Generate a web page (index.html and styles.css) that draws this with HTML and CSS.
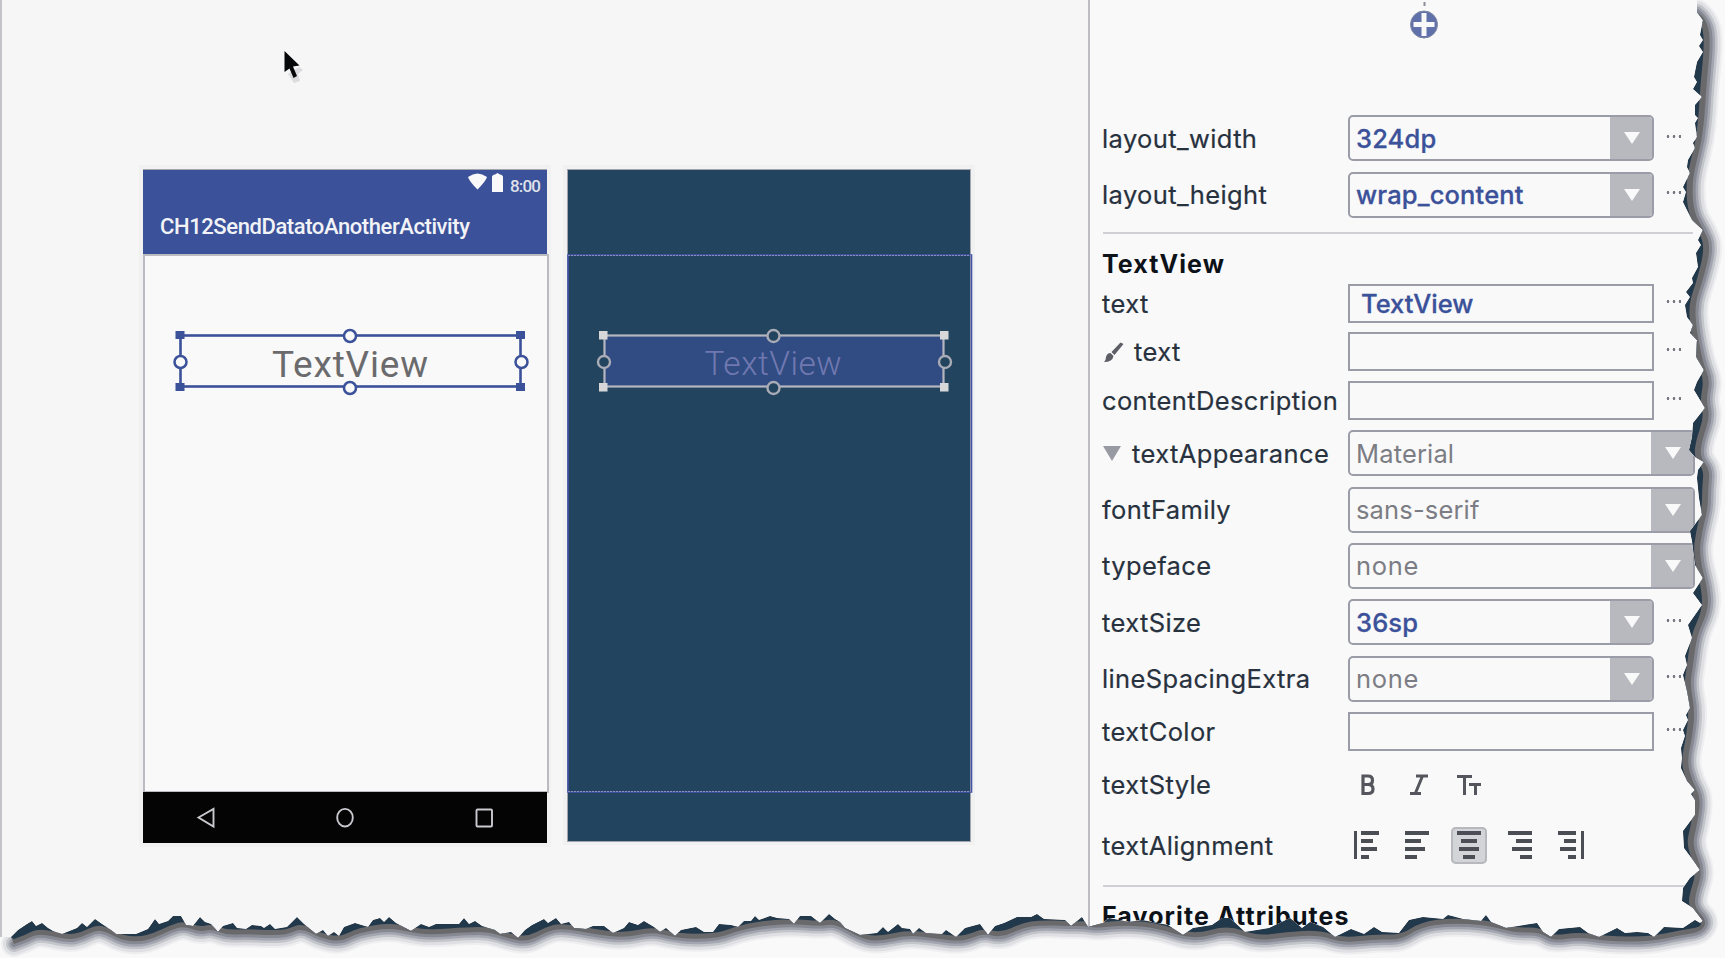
FILE: index.html
```html
<!DOCTYPE html>
<html lang="en">
<head>
<meta charset="utf-8">
<title>Layout Editor</title>
<link rel="stylesheet" href="styles.css">
</head>
<body>
<div class="editor">
  <main class="canvas">
    <svg class="surface" width="1088" height="958" viewBox="0 0 1088 958">
      <!-- design preview -->
      <rect class="halo" x="139" y="165" width="412" height="682"/>
      <rect class="halo" x="563" y="165" width="412" height="680"/>
      <rect x="143" y="169" width="404" height="86" fill="#3b5199"/>
      <path d="M143 169.500H547" stroke="#a3a5ad"/>
      <rect x="144" y="255" width="404" height="537" fill="#f9f9f9" stroke="#bbbcc1" stroke-width="2"/>
      <rect x="143" y="792" width="404" height="51" fill="#040404"/>
      <path d="M468 177Q477.500 170 487 177Q486 181 477.500 189.500Q469 181 468 177Z" fill="#f9f9f9"/>
      <path d="M492 177Q492 175 495 174.500L497.500 173L500 174.500Q503 175 503 177V192H492Z" fill="#f9f9f9"/>
      <text class="roboto clock" x="510" y="191.500" textLength="31">8:00</text>
      <text class="roboto title" x="160" y="233.500" textLength="310">CH12SendDatatoAnotherActivity</text>
      <rect x="180.500" y="335.500" width="340" height="51" fill="none" stroke="#3b5199" stroke-width="2.600"/>
      <g fill="#3b5199"><rect x="175.500" y="331" width="9" height="8"/><rect x="516" y="331" width="9" height="8"/><rect x="175.500" y="383" width="9" height="8"/><rect x="516" y="383" width="9" height="8"/></g>
      <g fill="#f9f9f9" stroke="#3b5199" stroke-width="2.500"><circle cx="350" cy="336" r="6"/><circle cx="350" cy="388" r="6"/><circle cx="180.500" cy="362" r="6"/><circle cx="521.500" cy="362" r="6"/></g>
      <text class="roboto view" x="272" y="377" textLength="156">TextView</text>
      <g fill="none" stroke="#c9cad0" stroke-width="1.900"><path d="M198.500 817.500L213.500 809V826.500Z"/><ellipse cx="345" cy="817.700" rx="7.800" ry="8.800"/><rect x="476.500" y="809.500" width="15.500" height="17" rx="1"/></g>
      <!-- blueprint -->
      <rect x="567.500" y="169.500" width="403" height="672" fill="#23445f" stroke="#a3a5ad"/>
      <rect x="568" y="255" width="403.500" height="537" fill="none" stroke="#4354a8" stroke-width="1.600"/>
      <path d="M568 255.500H971M568 791.500H971" stroke="#8b8fb8" stroke-width="1" stroke-dasharray="2 1"/>
      <rect x="604.500" y="335.500" width="339" height="51" fill="#304c83" stroke="#b5b6bf" stroke-width="2.200"/>
      <g fill="#d7d7da"><rect x="599" y="331" width="8.500" height="8.500"/><rect x="940" y="331" width="8.500" height="8.500"/><rect x="599" y="383" width="8.500" height="8.500"/><rect x="940" y="383" width="8.500" height="8.500"/></g>
      <g fill="#23445f" stroke="#a9abb6" stroke-width="2.400"><circle cx="773.500" cy="336" r="6"/><circle cx="773.500" cy="388" r="6"/><circle cx="604" cy="362" r="6"/><circle cx="945" cy="362" r="6"/></g>
      <text class="roboto blue" x="704.500" y="375" textLength="137">TextView</text>
      <!-- pointer -->
      <path d="M288 74L299 67L303 70L298 74L300 81L294 83Z" fill="#dcdce0"/>
      <path d="M284.500 51L299.500 65.500L293 66.500L297 76L293.500 78L289.500 68.500L284.500 72Z" fill="#050709"/>
    </svg>
  </main>
  <aside class="panel">
    <svg class="add" width="30" height="40" viewBox="0 0 30 40"><path d="M15.500 2V6" stroke="#8b8d97" stroke-width="2"/><circle cx="15" cy="24.500" r="13.500" fill="#6070aa" stroke="#8186a0"/><path d="M15 13V36M4.500 24.500H25.500" stroke="#f9f9f9" stroke-width="5"/></svg>
    <div class="row first"><label class="name">layout_width</label><div class="field combo"><span class="set">324dp</span><i class="drop"></i></div><b class="more"></b></div>
    <div class="row g11"><label class="name">layout_height</label><div class="field combo"><span class="set">wrap_content</span><i class="drop"></i></div><b class="more"></b></div>
    <hr class="rule g14">
    <h2 class="heading g15">TextView</h2>
    <div class="row short g5"><label class="name">text</label><div class="field"><span class="set inset">TextView</span></div><b class="more"></b></div>
    <div class="row short g9"><label class="name"><svg class="brush" width="30" height="22" viewBox="0 0 30 22"><path d="M18.500 1.500L21.500 3L12.500 14L9.500 11Z M8.500 12L11.500 15Q10.500 21 2 21Q4 19 4 16Q5 12 8.500 12Z" fill="#5e5f66"/></svg>text</label><div class="field"></div><b class="more"></b></div>
    <div class="row short g10"><label class="name">contentDescription</label><div class="field"></div><b class="more"></b></div>
    <div class="row g11"><label class="name"><i class="twist"></i>textAppearance</label><div class="field combo wide"><span>Material</span><i class="drop"></i></div></div>
    <div class="row g11"><label class="name">fontFamily</label><div class="field combo wide"><span>sans-serif</span><i class="drop"></i></div></div>
    <div class="row g10"><label class="name">typeface</label><div class="field combo wide"><span class="none">none</span><i class="drop"></i></div></div>
    <div class="row g11"><label class="name">textSize</label><div class="field combo"><span class="set">36sp</span><i class="drop"></i></div><b class="more"></b></div>
    <div class="row g11"><label class="name">lineSpacingExtra</label><div class="field combo"><span class="none">none</span><i class="drop"></i></div><b class="more"></b></div>
    <div class="row short g10"><label class="name">textColor</label><div class="field"></div><b class="more"></b></div>
    <div class="row style g19"><label class="name">textStyle</label>
      <svg width="150" height="30" viewBox="0 0 150 30" fill="none" stroke="#55565d" stroke-width="3"><path d="M14.500 6H20Q24.500 6 24.500 10.200Q24.500 14.500 20 14.500H14.500M20 14.500Q25 14.500 25 19Q25 23.500 20 23.500H14.500M15 4.500V25" stroke-width="3.200"/><path d="M68 6H80M62 23.500H73M74.500 6L67.500 23"/><path d="M109 6.500H124M116.500 6V25M121 14.500H133M127.500 14V25"/></svg>
    </div>
    <div class="row align g27"><label class="name">textAlignment</label>
      <div class="aligns">
        <svg width="36" height="37" viewBox="0 0 36 37"><path class="bar" d="M8.500 4V32"/><path d="M14 6H32M14 14H26M14 22H30M14 30H22"/></svg>
        <svg width="36" height="37" viewBox="0 0 36 37"><path d="M6 6H30M6 14H22M6 22H26M6 30H18"/></svg>
        <svg class="on" width="36" height="37" viewBox="0 0 36 37"><path d="M6 6H30M10 14H26M8 22H28M12 30H24"/></svg>
        <svg width="36" height="37" viewBox="0 0 36 37"><path d="M5 6H29M13 14H29M9 22H29M17 30H29"/></svg>
        <svg width="36" height="37" viewBox="0 0 36 37"><path class="bar" d="M27.500 4V32"/><path d="M3 6H21M9 14H21M5 22H21M13 30H21"/></svg>
      </div>
    </div>
    <hr class="rule g21">
    <h2 class="heading g14">Favorite Attributes</h2>
  </aside>
  <!-- torn paper border along the right and bottom sides -->
  <svg class="torn" width="1725" height="958" viewBox="0 0 1725 958">
    <defs>
      <path id="tear" d="M1697 12L1703 20L1700 35L1703 40L1699 46L1703 52L1697 62L1694 77L1697 82L1693 89L1702 97L1695 105V115L1698 118L1695 123L1697 137L1693 143L1695 148L1688 160L1687 167L1690 173L1683 187L1686 192L1683 202L1688 212L1692 220L1703 230L1698 240L1701 245L1696 253L1698 267L1692 278L1693 283L1686 292L1690 297L1685 305L1687 317L1693 325L1690 333L1697 340L1696 357L1704 370L1697 382L1694 390L1705 408L1693 423L1692 437L1689 450L1695 457L1704 462L1698 470L1697 478L1699 498L1702 515L1690 531L1692 541L1695 565L1703 578L1693 593L1702 605L1688 625L1692 638L1685 656L1687 665L1683 675L1687 691L1690 708L1686 715L1688 720L1683 730L1685 736L1681 748L1682 758L1681 768L1687 781L1695 790L1691 794L1695 800V815L1683 831L1684 848L1693 860L1700 870L1690 878L1683 888L1682 901L1693 908L1703 921L1700 923L1695 920L1683 928L1664 927L1654 937L1648 933L1637 932L1625 933L1617 928L1599 937L1588 933L1580 927L1559 929L1551 937L1543 932L1537 923L1506 928L1491 922L1486 915L1481 921L1463 919L1448 915L1443 919L1423 917L1409 920L1399 933L1382 932L1374 927L1364 934L1351 929L1335 937L1323 927L1310 922L1302 928L1290 918L1269 928L1245 932L1230 918L1222 918L1212 925L1193 928L1183 935L1168 925L1142 920L1129 922L1109 918L1103 923L1088 927L1082 917L1071 926L1065 920L1044 919L1037 914L1031 917H1017L1004 923L995 926L988 935L980 924L965 928L956 937L946 930L942 934L926 933L919 928L913 934L910 929L902 928L898 924L888 932L883 927L877 933L860 935L845 928L840 922L835 919L829 914L820 923L811 916H800L794 924L789 919L777 918L770 916L759 920L755 916L751 921H744L738 927L731 925L719 924L713 932H704L696 927L681 930L675 936L666 928L660 932L654 927L644 921L638 925L629 922L624 928L613 933L604 926H593L586 929L574 928L569 922L561 924L556 918L548 923L544 919L532 925L525 930L518 938L511 932L500 934L495 930L482 926L475 921L469 924L464 918L459 924H436L429 927L421 924L411 931L396 923L389 917L384 922L380 918L373 920L368 927L355 923L344 927L339 936L334 932L328 936L323 930L316 934L304 924L297 917L287 927L275 929L270 924L264 928L261 926L252 925L246 929L237 928L233 923L223 926L218 932L211 924L205 922L200 917L193 926L186 925L181 916H173L168 921L159 924L155 919L148 929L136 934H116L111 930L102 924L95 919L87 927L82 923L77 928L62 934L53 931L48 928L42 923L36 926L32 921L27 924L18 930L11 937"/>
      <path id="edge" d="M1697 12L1705 18L1711 37L1706 90L1705 110L1702 140L1695 167L1692 187L1694 213L1704 230L1711 247L1703 280L1695 303L1696 327L1703 363L1710 380L1706 400L1710 417L1702 440L1700 457L1710 470L1708 488V508L1702 531L1699 555L1708 591V611L1697 635L1693 665L1690 685L1695 711L1692 738L1687 761L1692 781L1701 798L1697 825L1692 845L1703 871L1695 895V908L1707 921L1701 932L1681 935L1648 942L1607 941L1578 937L1553 941L1539 932L1516 933L1487 925L1450 923L1421 927L1401 940L1376 939L1343 943L1319 935L1286 937L1257 941L1228 930L1193 940L1158 928L1125 925L1096 928L1085 926H1069L1040 925L1022 928L1001 938L983 933L963 942L933 938L908 935L876 942L858 937L836 924L819 926L795 924L769 925L740 930L719 938L690 939L674 937L651 932L624 938L594 934L561 928L546 932L527 942L507 938L489 932H468L429 935L411 932L389 928L357 933L341 942L320 938L302 928L286 935H264L246 934L227 935L211 929L200 932L184 926L171 930L154 938L139 942L121 940L107 932L96 930L82 937L68 940L39 933L25 940L14 944"/>
      <clipPath id="outside"><path id="outer" d=""/></clipPath>
    </defs>
  </svg>
</div>
<script src="torn.js"></script>
</body>
</html>
```

FILE: styles.css
```css
* { box-sizing: border-box; }
body { margin: 0; background: #f9f9f9; font-family: Inter, "Open Sans", sans-serif; }
.editor { position: relative; display: flex; width: 1725px; height: 958px; overflow: hidden; }
.canvas { width: 1088px; background: #f6f6f6; border-left: 2px solid #c3c4c9; flex: none; }
.surface { display: block; margin-left: -2px; }
.halo { fill: #f1f1f2; }
.roboto { font-family: Roboto, sans-serif; }
.clock { font-size: 17px; font-weight: 500; fill: #dfe1ea; }
.title { font-size: 22px; font-weight: 500; fill: #f2f3f7; }
.view { font-size: 37px; fill: #6b6b6e; }
.blue { font-size: 33.500px; fill: #7178b0; font-weight: 300; }

.panel { flex: 1; background: #f9f9f9; border-left: 2px solid #bcbdc2; padding-left: 12px; display: flex; flex-direction: column; color: #28313e; }
.add { display: block; margin-left: 307px; }
.row { display: flex; align-items: center; height: 46px; flex: none; }
.row.short { height: 39px; }
.row.style { height: 30px; }
.row.align { height: 37px; }
.row.first { margin-top: 75px; }
.g5 { margin-top: 5px; } .g9 { margin-top: 9px; } .g10 { margin-top: 10px; }
.g11 { margin-top: 10.500px; } .g14 { margin-top: 14px; } .g15 { margin-top: 15px; }
.g19 { margin-top: 19px; } .g21 { margin-top: 21px; } .g27 { margin-top: 27px; }
.name { width: 246px; flex: none; display: flex; align-items: center; padding-top: 1px; font-size: 25.500px; line-height: 30px; letter-spacing: 0.380px; white-space: nowrap; -webkit-text-stroke: 0.200px; }
.field { width: 306px; height: 100%; border: 2px solid #9a9da8; display: flex; align-items: center; font-size: 25.500px; line-height: 30px; letter-spacing: 0.150px; color: #7c7d84; white-space: nowrap; }
.field span { padding-top: 1px; }
.combo { border-radius: 5px; padding-left: 6px; justify-content: space-between; overflow: hidden; }
.none { letter-spacing: 0.700px; }
.wide { width: 347px; }
.set { color: #3b5199; font-weight: 500; -webkit-text-stroke: 0.300px; }
.inset { margin-left: 11px; letter-spacing: 0; }
.drop { width: 44px; height: 46px; margin: -2px; background: #b8b9be; flex: none; display: flex; align-items: center; justify-content: center; }
.drop::after { content: ""; border: 8px solid transparent; border-top: 12px solid #f9f9f9; border-bottom: 0; }
.more { width: 16px; height: 3px; margin: 0 0 4px 11px; background: radial-gradient(circle, #777983 1.200px, transparent 1.600px) 0 0 / 6px 3px; }
.twist { border: 9px solid transparent; border-top: 15px solid #989aa3; border-bottom: 0; margin: 0 11px 0 1px; }
.brush { flex: none; margin-right: 2px; }
.rule { width: 590px; height: 2px; flex: none; margin-bottom: 0; margin-left: 1px; border: 0; background: #cfd0d4; }
.heading { height: 30px; flex: none; margin-bottom: 0; font-size: 25px; line-height: 30px; font-weight: 700; letter-spacing: 1.100px; color: #0d1219; white-space: nowrap; }
.aligns { display: flex; gap: 16px; fill: none; stroke: #4c4e56; stroke-width: 4px; margin-left: -1px; }
.aligns .bar { stroke-width: 3px; }
.on { background: #d3d4d8; border-radius: 5px; box-shadow: inset 0 0 0 2px #b8b9be; }

.torn { position: absolute; inset: 0; }
.torn .line { fill: none; stroke-linejoin: round; stroke-linecap: round; }
```

FILE: torn.js
```js
// Builds the torn band from its jagged inner line and its smooth outer line.
const ns = "http://www.w3.org/2000/svg";
const torn = document.querySelector(".torn");
const tear = document.getElementById("tear").getAttribute("d");
const edge = document.getElementById("edge").getAttribute("d");
document.getElementById("outer").setAttribute("d", tear + "L0 937V958H1725V0H1697Z");

function points(d) {
  const list = [];
  let x = 0, y = 0;
  for (const [, c, rest] of d.matchAll(/([MLHV])([^MLHV]*)/g)) {
    const n = rest.trim().split(/\s+/).map(Number);
    if (c === "H") x = n[0];
    else if (c === "V") y = n[0];
    else [x, y] = n;
    list.push([x, y]);
  }
  return list;
}

// Rounds a polyline by curving through the midpoints of its segments.
function smooth(list) {
  let d = list[0].join(" ");
  for (let i = 1; i < list.length - 1; i++) {
    const [x, y] = list[i], [nx, ny] = list[i + 1];
    d += `Q${x} ${y} ${(x + nx) / 2} ${(y + ny) / 2}`;
  }
  return d + "L" + list[list.length - 1].join(" ");
}

const layer = document.createElementNS(ns, "g");
layer.setAttribute("clip-path", "url(#outside)");
torn.append(layer);

function add(attrs) {
  const p = document.createElementNS(ns, "path");
  for (const k in attrs) p.setAttribute(k, attrs[k]);
  layer.append(p);
}

add({ d: "M0 0H1725V958H0Z", fill: "#f9f9f9" });
const line = "M" + smooth(points(edge));
for (const [w, color] of [[26, "#efeff1"], [22, "#dfe0e3"], [16, "#c3c5ca"], [11, "#a3a6b0"], [6, "#868892"]]) {
  add({ d: line, class: "line", stroke: color, "stroke-width": w });
}

function band(dx, dy, fill) {
  const back = points(edge).reverse().map(([x, y]) => {
    const right = x > 1680 && y < 922;
    return [x - (right ? dx : 0), y - (right ? 0 : dy)];
  });
  add({ d: tear + "L" + smooth(back) + "Z", fill });
}
band(0, 0, "#69696b");
band(6, 5, "#22384b");
```
